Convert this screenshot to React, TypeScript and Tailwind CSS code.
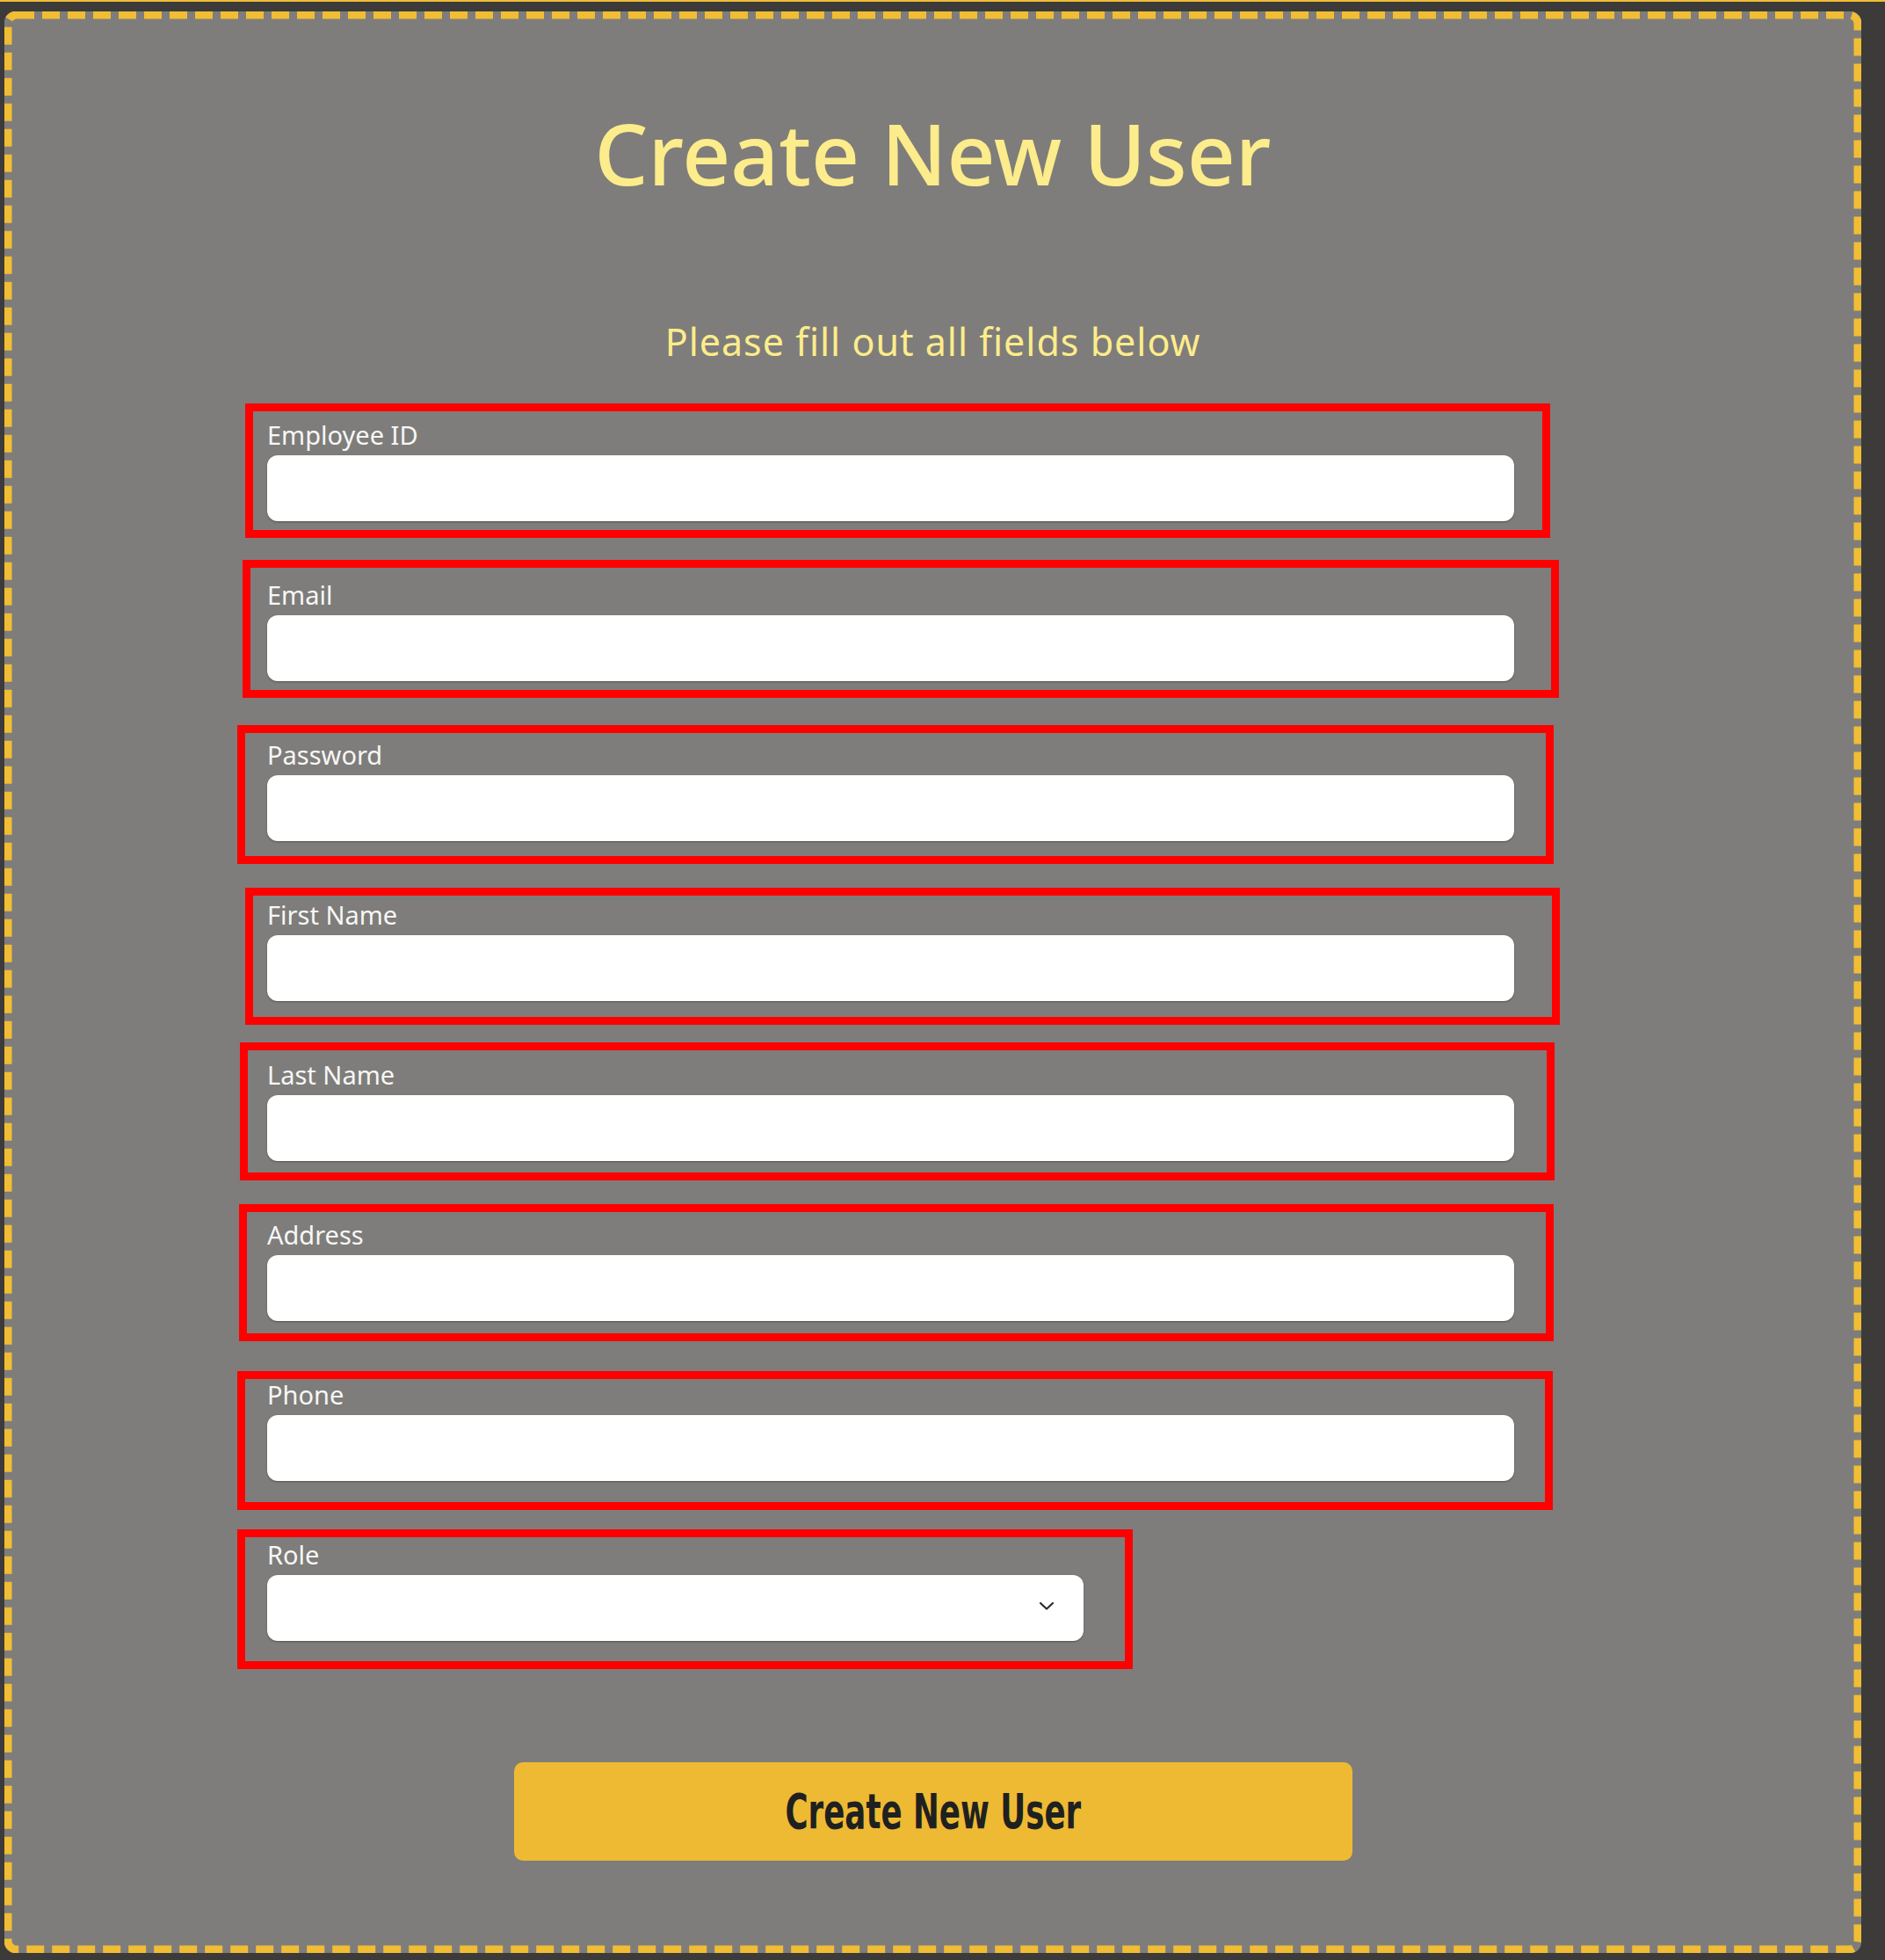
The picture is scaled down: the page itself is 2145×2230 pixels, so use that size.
import { useState } from "react";

// red annotation boxes, offsets relative to each field wrapper
const FIELDS = [
  { label: "Employee ID", box: "-left-[25px] -top-[22px] -right-[41px] -bottom-[19px]" },
  { label: "Email", box: "-left-[28px] -top-[26px] -right-[51px] -bottom-[19px]" },
  { label: "Password", box: "-left-[34px] -top-[20px] -right-[45px] -bottom-[26px]" },
  { label: "First Name", box: "-left-[25px] -top-[17px] -right-[52px] -bottom-[27px]" },
  { label: "Last Name", box: "-left-[31px] -top-[23px] -right-[46px] -bottom-[22px]" },
  { label: "Address", box: "-left-[32px] -top-[21px] -right-[45px] -bottom-[23px]" },
  { label: "Phone", box: "-left-[34px] -top-[13px] -right-[44px] -bottom-[33px]" },
];

const SANS = "font-['Noto_Sans','Open_Sans',sans-serif]";

function Field({ label, box }: { label: string; box: string }) {
  const [value, setValue] = useState("");
  return (
    <div className="relative flex w-[1419px] flex-col">
      <label className="text-[29px] leading-[28px] text-[#f7f7f5]">{label}</label>
      <input
        type={label === "Password" ? "password" : "text"}
        value={value}
        onChange={(e) => setValue(e.target.value)}
        className="mt-[9px] h-[75px] rounded-[12px] bg-white px-4 text-[26px] text-gray-800 shadow-[0_1px_2px_rgba(0,0,0,0.35)] outline-none"
      />
      <div className={`pointer-events-none absolute border-[9px] border-[#ff0000] ${box}`} />
    </div>
  );
}

export default function App() {
  const [role, setRole] = useState("");

  return (
    <div className={`h-[2230px] w-[2145px] border-t-2 border-[#f0bd34] bg-[#3c3b39] ${SANS}`}>
      <div className="relative ml-[5px] mt-[11px] flex h-[2209px] w-[2113px] flex-col rounded-[12px] bg-[#7e7d7b] p-[8px] pt-[113px]">
        {/* dashed outline */}
        <svg className="pointer-events-none absolute left-0 top-0" width="2113" height="2209">
          <rect
            x="4"
            y="4"
            width="2105"
            height="2201"
            rx="10"
            fill="none"
            stroke="#f0bd34"
            strokeWidth="9"
            strokeDasharray="20 9"
          />
        </svg>

        <h1 className="text-center text-[96px] font-medium leading-[96px] text-[#fdec8b]">
          Create New User
        </h1>
        <p className="mt-[146px] text-center text-[43px] leading-[42px] tracking-[1px] text-[#fdec8b]">
          Please fill out all fields below
        </p>

        <form className="mt-[71px] flex flex-col gap-[70px] pl-[291px]" onSubmit={(e) => e.preventDefault()}>
          {FIELDS.map((f) => (
            <Field key={f.label} label={f.label} box={f.box} />
          ))}

          {/* Role select */}
          <div className="relative flex w-[929px] flex-col">
            <label className="text-[29px] leading-[28px] text-[#f7f7f5]">Role</label>
            <div className="relative mt-[9px]">
              <select
                value={role}
                onChange={(e) => setRole(e.target.value)}
                className="h-[75px] w-full appearance-none rounded-[12px] bg-white px-4 text-[26px] text-gray-800 shadow-[0_1px_2px_rgba(0,0,0,0.35)] outline-none"
              >
                <option value=""></option>
                <option value="admin">Admin</option>
                <option value="manager">Manager</option>
                <option value="employee">Employee</option>
              </select>
              <svg
                className="pointer-events-none absolute right-[33px] top-[29px]"
                width="18"
                height="12"
                viewBox="0 0 18 12"
                fill="none"
                stroke="#2b2b2b"
                strokeWidth="2.2"
                strokeLinecap="round"
                strokeLinejoin="round"
              >
                <polyline points="2,3 9,9.5 16,3" />
              </svg>
            </div>
            <div className="pointer-events-none absolute -left-[34px] -top-[15px] -right-[56px] -bottom-[32px] border-[9px] border-[#ff0000]" />
          </div>

          <button
            type="submit"
            className="ml-[281px] mt-[68px] flex h-[112px] w-[954px] items-center justify-center rounded-[10px] bg-[#eeba33]"
          >
            <span className="inline-block scale-x-[0.72] font-['DejaVu_Sans_Condensed','DejaVu_Sans',sans-serif] text-[55px] font-bold leading-none text-[#1f2120] font-stretch-condensed">
              Create New User
            </span>
          </button>
        </form>
      </div>
    </div>
  );
}
